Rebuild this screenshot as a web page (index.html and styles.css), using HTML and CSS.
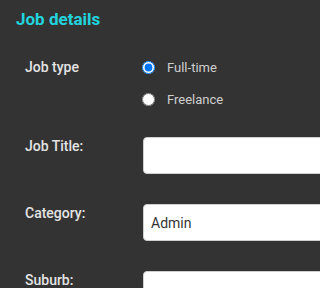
FILE: index.html
```html
<!DOCTYPE html>
<html lang="en">
<head>
<meta charset="utf-8">
<title>Job details</title>
<link rel="stylesheet" href="styles.css">
</head>
<body>
<div class="page">
  <h1 class="title">Job details</h1>
  <div class="form">
    <div class="label">Job type</div>
    <div class="radios">
      <label class="opt"><input type="radio" name="type" class="radio" checked><span>Full-time</span></label>
      <label class="opt"><input type="radio" name="type" class="radio"><span>Freelance</span></label>
    </div>
    <div class="label">Job Title:</div>
    <input type="text" class="field">
    <div class="label">Category:</div>
    <div class="field select">Admin</div>
    <div class="label">Suburb:</div>
    <input type="text" class="field">
  </div>
</div>
</body>
</html>
```
FILE: styles.css
```css
html, body {
  margin: 0;
  padding: 0;
  background: #333333;
  overflow: hidden;
}
.page {
  box-sizing: border-box;
  height: 100vh;
  overflow: hidden;
  padding: 9px 0 0 16px;
  font-family: Roboto, "Noto Sans", sans-serif;
}
.title {
  margin: 0;
  font-size: 17px;
  line-height: 20px;
  font-weight: 700;
  color: #22d3dd;
}
.form {
  margin: 30px 0 0 9px;
  display: grid;
  grid-template-columns: 118px 1fr;
  row-gap: 30px;
  align-items: start;
}
.label {
  font-size: 14px;
  line-height: 16px;
  font-weight: 500;
  color: #e4e4e4;
  padding-top: 1px;
}
.form > .label:first-child {
  padding-top: 0;
}
.radios {
  display: flex;
  flex-direction: column;
  gap: 16px;
  margin-left: -1px;
}
.opt {
  display: flex;
  align-items: center;
  height: 16px;
  font-size: 13px;
  color: #cfcfcf;
}
.radio {
  margin: 0 12px 0 0;
  width: 13px;
  height: 13px;
}
.field {
  box-sizing: border-box;
  height: 37px;
  width: calc(100% + 40px);
  margin: 0;
  border: 1px solid #d0d0d0;
  border-radius: 4px;
  background: #ffffff;
  font-family: Roboto, sans-serif;
  font-size: 14px;
  color: #333333;
  padding: 0 7px;
}
.select {
  display: flex;
  align-items: center;
}
```
